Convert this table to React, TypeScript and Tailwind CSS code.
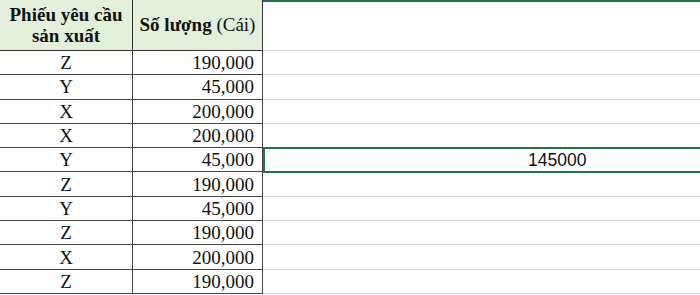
import React from "react";

const rows: [string, string][] = [
  ["Z", "190,000"],
  ["Y", "45,000"],
  ["X", "200,000"],
  ["X", "200,000"],
  ["Y", "45,000"],
  ["Z", "190,000"],
  ["Y", "45,000"],
  ["Z", "190,000"],
  ["X", "200,000"],
  ["Z", "190,000"],
];

export default function App(): React.ReactElement {
  return (
    <div className="w-[700px] h-[295px] overflow-hidden bg-white text-[#111] font-['Liberation_Serif','Times_New_Roman',serif]">
      {/* header */}
      <div className="flex h-[51px]">
        <div className="w-[133px] shrink-0 bg-[#e2efda] border-r border-b border-[#333] flex items-center justify-center text-center font-bold text-[19px] leading-[21px] pb-[1px]">
          Phiếu yêu cầu
          <br />
          sản xuất
        </div>
        <div className="w-[130px] shrink-0 bg-[#e2efda] border-r border-b border-[#333] flex items-center justify-center text-[19px] whitespace-nowrap">
          <span className="font-bold">Số lượng</span>&nbsp;(Cái)
        </div>
        <div className="flex-1 border-t-2 border-t-[#217346] border-b border-b-[#d4d4d4]" />
      </div>

      {rows.map(([code, qty], i) => (
        <div key={i} className="flex h-[24.3px]">
          <div className="w-[133px] shrink-0 border-r border-b border-[#444] flex items-center justify-center text-[19px] leading-none">
            {code}
          </div>
          <div className="w-[130px] shrink-0 border-r border-b border-[#444] flex items-center justify-end pr-[8px] text-[19px] leading-none">
            {qty}
          </div>
          {i === 4 ? (
            <div className="shrink-0 w-[460px] border-2 border-[#217346] -mt-[1px] h-[26px] flex items-center pl-[263px] font-['Liberation_Sans',Arial,sans-serif] text-[17.5px] text-[#111]">
              145000
            </div>
          ) : (
            <div className="flex-1 border-b border-[#d4d4d4]" />
          )}
        </div>
      ))}
    </div>
  );
}
